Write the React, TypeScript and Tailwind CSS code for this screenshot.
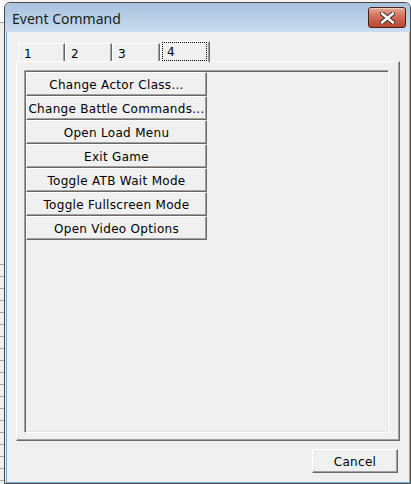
const ui = { fontFamily: '"DejaVu Sans", Verdana, sans-serif' };

const commands = [
  'Change Actor Class...',
  'Change Battle Commands...',
  'Open Load Menu',
  'Exit Game',
  'Toggle ATB Wait Mode',
  'Toggle Fullscreen Mode',
  'Open Video Options',
];

const tabs = [
  { label: '1', w: 'w-[47px]' },
  { label: '2', w: 'w-[47px]' },
  { label: '3', w: 'w-[48px]' },
];

function CloseButton() {
  return (
    <button className="flex h-[21px] w-[38px] items-center justify-center rounded-[3px] border border-[#4a1d17] bg-gradient-to-b from-[#e6a795] via-[#cf6a55] to-[#bd4630] shadow-[inset_0_1px_0_rgba(255,255,255,0.45)]">
      <svg width="15" height="12" viewBox="0 0 15 12">
        <path d="M2 1.5 L13 10.5 M13 1.5 L2 10.5" stroke="#3b2a28" strokeWidth="4.6" strokeLinecap="round" />
        <path d="M2 1.5 L13 10.5 M13 1.5 L2 10.5" stroke="#ffffff" strokeWidth="2.6" strokeLinecap="round" />
      </svg>
    </button>
  );
}

export default function App() {
  return (
    <div className="flex h-[484px] w-[411px] overflow-hidden bg-[#f4f4f4]">
      {/* edge of the window behind */}
      <div className="flex w-[4px] shrink-0 flex-col">
        <div className="h-[22px] bg-white" />
        <div className="h-px bg-[#a0a0a0]" />
        <div className="h-[230px] bg-[#f0f0f0]" />
        <div className="flex-1 bg-[repeating-linear-gradient(to_bottom,#f0f0f0_0px,#f0f0f0_11px,#a8a8a8_11px,#a8a8a8_12px)]" />
      </div>

      <div className="mt-[2px] flex h-[482px] w-[407px] shrink-0 flex-col rounded-t-[6px] border border-[#4b4b4b] bg-[#dfeaf6]">
        <div className="flex h-[29px] shrink-0 items-start justify-between rounded-t-[5px] bg-gradient-to-b from-[#a8c2de] to-[#cadcf0] pl-[7px] pr-[4px]">
          <span className="pt-[6px] text-[14px] leading-[20px] text-[#1a1a1a]" style={{ fontFamily: '"Noto Sans", "Open Sans", sans-serif' }}>
            Event Command
          </span>
          <div className="pt-[4px]">
            <CloseButton />
          </div>
        </div>

        <div className="flex flex-1 pl-[1px]">
          <div className="flex flex-1 flex-col border-x border-b border-[#79aee0] bg-[#f0f0f0] px-[9px] pt-[9px]" style={ui}>
            {/* tab strip */}
            <div className="flex h-[20px] items-end pl-[2px] text-[12px] text-black">
              {tabs.map((t) => (
                <div
                  key={t.label}
                  className={`${t.w} flex h-[18px] items-center border-l border-t border-r border-white border-r-[#696969] pl-[5px] pt-[2px] leading-none shadow-[inset_-1px_0_0_#a0a0a0]`}
                >
                  {t.label}
                </div>
              ))}
              <div className="relative z-10 -mb-px flex h-[21px] w-[50px] border-l border-t border-r border-white border-r-[#696969] bg-[#f0f0f0] pl-px shadow-[inset_-1px_0_0_#a0a0a0]">
                <div className="flex h-[19px] w-[45px] items-center border border-dotted border-black pl-[4px] leading-none">
                  4
                </div>
              </div>
            </div>

            {/* tab page */}
            <div className="h-[380px] border border-white border-b-[#696969] border-r-[#696969] pl-[7px] pt-[8px] shadow-[inset_-1px_-1px_0_#a0a0a0]">
              <div className="h-[363px] w-[365px] border border-[#a0a0a0] border-b-white border-r-white pl-px pt-px shadow-[inset_1px_1px_0_#696969,inset_-1px_-1px_0_#e3e3e3]">
                {commands.map((c) => (
                  <div
                    key={c}
                    className="flex h-[24px] w-[181px] items-center justify-center border border-white border-b-[#696969] border-r-[#696969] bg-[#f0f0f0] pt-px text-[12px] leading-none tracking-[0.3px] text-black shadow-[inset_-1px_-1px_0_#a0a0a0]"
                  >
                    {c}
                  </div>
                ))}
              </div>
            </div>

            <div className="mt-[8px] flex justify-end pr-[2px]">
              <button className="flex h-[24px] w-[86px] items-center justify-center border border-white border-b-[#696969] border-r-[#696969] bg-[#f0f0f0] pt-px text-[12px] leading-none tracking-[0.3px] text-black shadow-[inset_-1px_-1px_0_#a0a0a0]">
                Cancel
              </button>
            </div>
          </div>
        </div>
      </div>
    </div>
  );
}
